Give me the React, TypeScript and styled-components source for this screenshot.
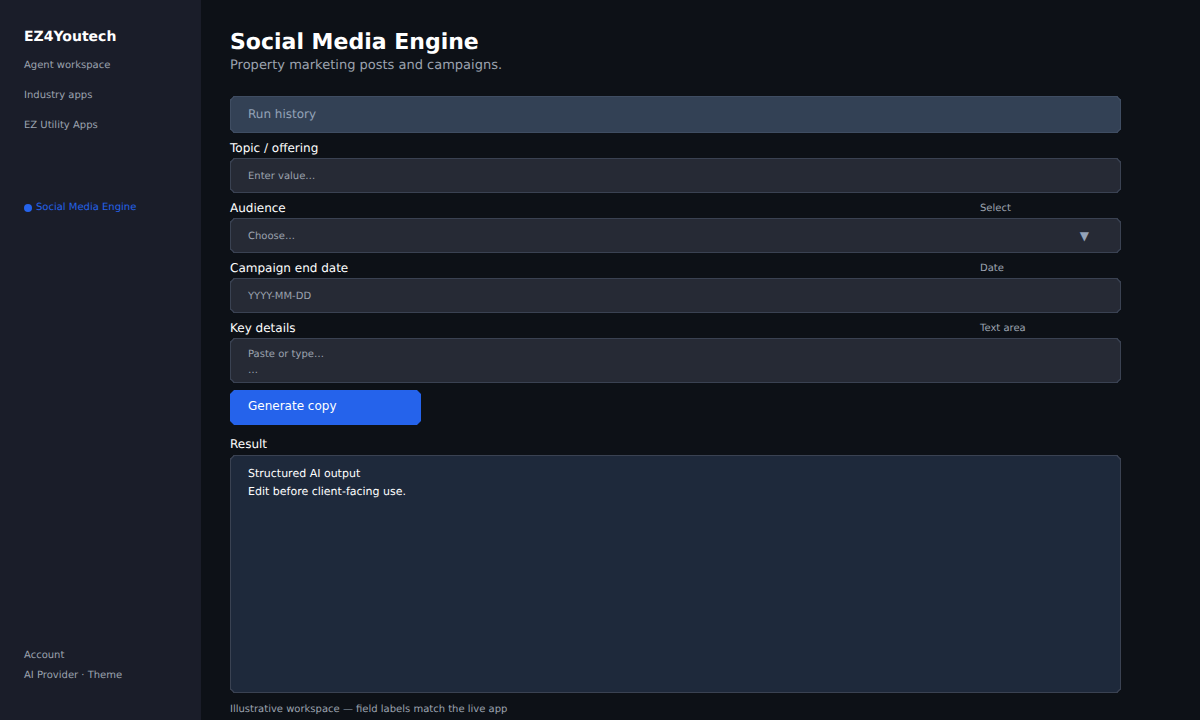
import React from "react";
import styled, { createGlobalStyle } from "styled-components";

const Global = createGlobalStyle`
  html, body, #root { margin: 0; padding: 0; height: 100%; }
  body {
    background: #0d1117;
    font-family: "DejaVu Sans", sans-serif;
    text-rendering: geometricPrecision;
    overflow: hidden;
  }
`;

const Shell = styled.div`
  display: flex;
  width: 1200px;
  height: 720px;
  background: #0d1117;
`;

const Sidebar = styled.aside`
  width: 201px;
  flex: none;
  box-sizing: border-box;
  height: 720px;
  padding: 28px 24px 0;
  background: #1a1d29;
  display: flex;
  flex-direction: column;
`;

const Brand = styled.div`
  font-size: 14px;
  line-height: 18px;
  font-weight: 700;
  color: #ffffff;
  margin-bottom: 14px;
`;

const NavGroup = styled.nav`
  display: flex;
  flex-direction: column;
  gap: 18px;
`;

const NavItem = styled.div<{ $active?: boolean }>`
  font-size: 10px;
  line-height: 12px;
  color: ${(p) => (p.$active ? "#2563eb" : "#9ca3af")};
`;

const ActiveItem = styled(NavItem)`
  margin-top: 70px;
  display: flex;
  align-items: center;
  gap: 4px;
`;

const Dot = styled.span`
  width: 8px;
  height: 8px;
  border-radius: 50%;
  background: #2563eb;
`;

const Footer = styled.div`
  margin-top: auto;
  margin-bottom: 38px;
  display: flex;
  flex-direction: column;
  gap: 8px;
`;

const Main = styled.main`
  flex: 1;
  box-sizing: border-box;
  padding: 30px 0 0 29px;
`;

const Content = styled.div`
  width: 891px;
  display: flex;
  flex-direction: column;
`;

const Title = styled.h1`
  margin: 0;
  font-size: 22px;
  line-height: 26px;
  font-weight: 700;
  color: #ffffff;
`;

const Subtitle = styled.p`
  margin: 1px 0 21px;
  font-size: 13px;
  line-height: 18px;
  color: #9ca3af;
`;

const Box = styled.div`
  box-sizing: border-box;
  border-radius: 4px;
  corner-shape: bevel;
  border: 1px solid #3a4252;
  padding: 0 17px;
`;

const HistoryBar = styled(Box)`
  height: 37px;
  background: #334155;
  border-color: #3f4d62;
  font-size: 12px;
  line-height: 35px;
  color: #94a3b8;
  margin-bottom: 5px;
`;

const LabelRow = styled.div<{ $gap?: number }>`
  height: 20px;
  display: flex;
  align-items: center;
  justify-content: space-between;
  margin-top: ${(p) => p.$gap ?? 0}px;
`;

const Label = styled.span`
  font-size: 12px;
  line-height: 20px;
  color: #ffffff;
`;

const Kind = styled.span`
  width: 141px;
  font-size: 10px;
  line-height: 21px;
  align-self: flex-start;
  color: #9ca3af;
`;

const Input = styled(Box)`
  height: 35px;
  background: #262a35;
  padding-top: 1px;
  font-size: 10px;
  line-height: 34px;
  color: #9ca3af;
  display: flex;
  justify-content: space-between;
`;

const Caret = styled.span`
  font-size: 12px;
  line-height: 33px;
  color: #94a3b8;
  margin-right: 14px;
`;

const TextArea = styled(Input)`
  height: 45px;
  display: block;
  padding-top: 8px;
  line-height: 16px;
`;

const Button = styled.button`
  box-sizing: border-box;
  width: 191px;
  height: 35px;
  margin-top: 7px;
  padding: 0 18px 4px;
  border: 0;
  border-radius: 4px;
  corner-shape: bevel;
  background: #2563eb;
  color: #ffffff;
  font-family: inherit;
  font-size: 12px;
  text-align: left;
`;

const Result = styled(Box)`
  height: 238px;
  margin-top: 1px;
  background: #1e293b;
  padding-top: 9px;
  font-size: 11px;
  line-height: 18px;
  color: #ffffff;
`;

const Note = styled.div`
  margin-top: 11px;
  font-size: 10px;
  line-height: 12px;
  color: #9ca3af;
`;

export default function App() {
  return (
    <Shell>
      <Global />
      <Sidebar>
        <Brand>EZ4Youtech</Brand>
        <NavGroup>
          <NavItem>Agent workspace</NavItem>
          <NavItem>Industry apps</NavItem>
          <NavItem>EZ Utility Apps</NavItem>
        </NavGroup>
        <ActiveItem $active><Dot />Social Media Engine</ActiveItem>
        <Footer>
          <NavItem>Account</NavItem>
          <NavItem>AI Provider · Theme</NavItem>
        </Footer>
      </Sidebar>
      <Main>
        <Content>
          <Title>Social Media Engine</Title>
          <Subtitle>Property marketing posts and campaigns.</Subtitle>
          <HistoryBar>Run history</HistoryBar>
          <LabelRow><Label>Topic / offering</Label></LabelRow>
          <Input>Enter value…</Input>
          <LabelRow $gap={5}><Label>Audience</Label><Kind>Select</Kind></LabelRow>
          <Input>Choose…<Caret>▼</Caret></Input>
          <LabelRow $gap={5}><Label>Campaign end date</Label><Kind>Date</Kind></LabelRow>
          <Input>YYYY-MM-DD</Input>
          <LabelRow $gap={5}><Label>Key details</Label><Kind>Text area</Kind></LabelRow>
          <TextArea>Paste or type…<br />…</TextArea>
          <Button>Generate copy</Button>
          <LabelRow $gap={9}><Label>Result</Label></LabelRow>
          <Result>Structured AI output<br />Edit before client-facing use.</Result>
          <Note>Illustrative workspace — field labels match the live app</Note>
        </Content>
      </Main>
    </Shell>
  );
}
